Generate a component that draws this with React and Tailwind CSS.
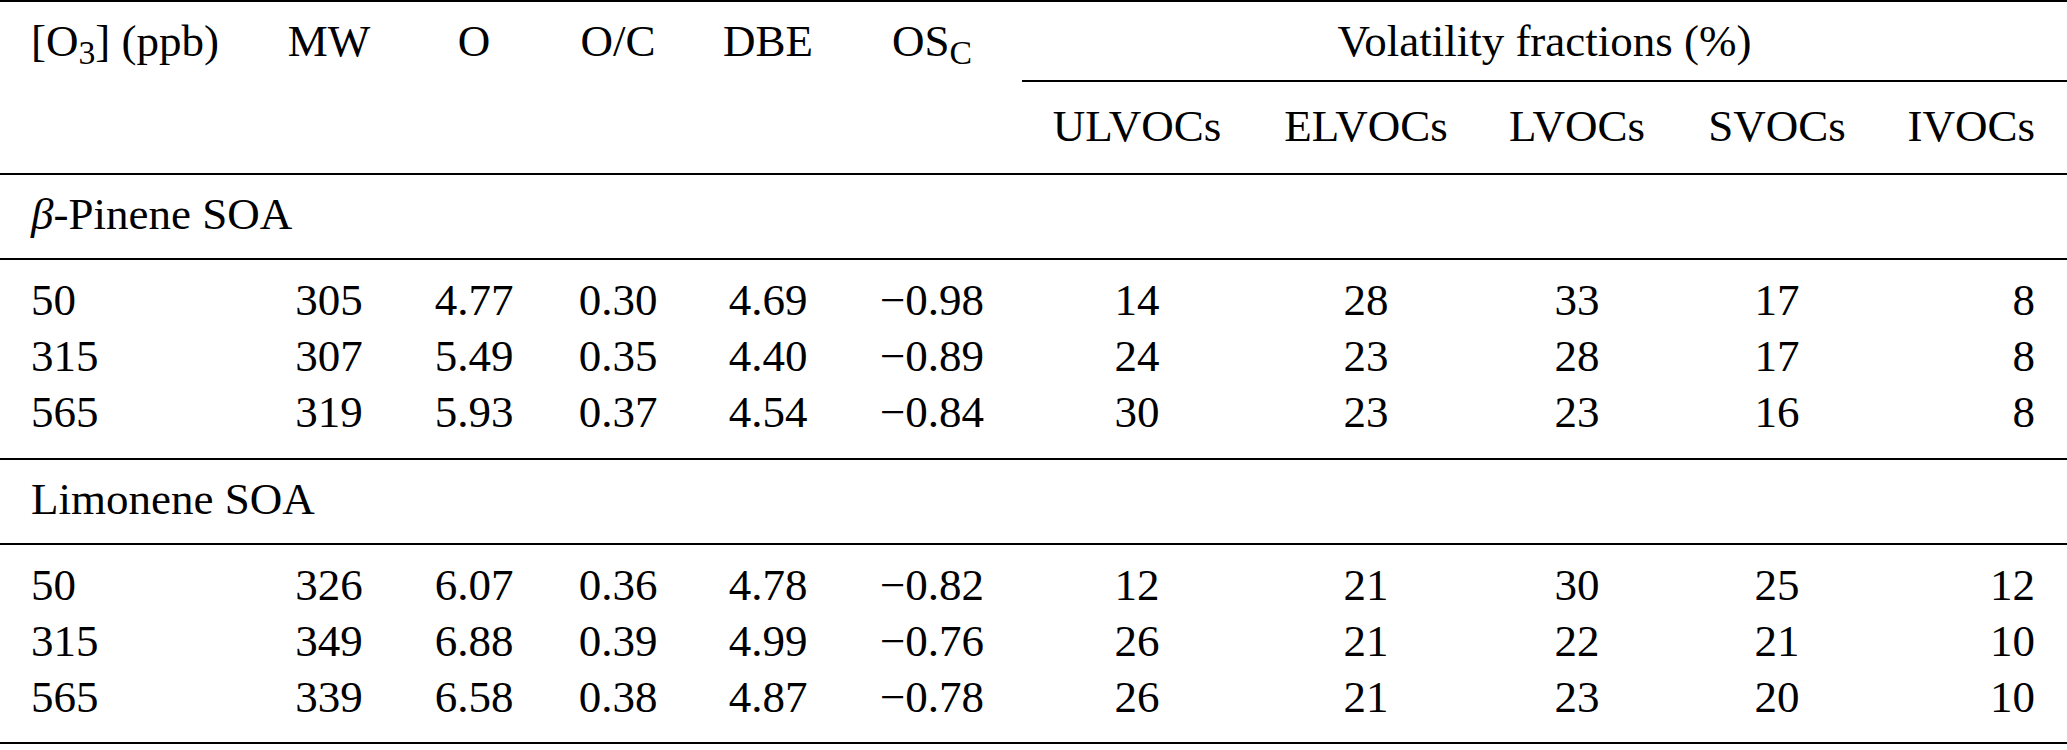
import React from 'react';

const grid = 'grid grid-cols-[270px_118px_172px_116px_184px_144px_266px_192px_230px_170px_205px]';

const groups = [
  {
    label: <><i>β</i>-Pinene SOA</>,
    pad: 'pb-[5px]',
    body: 'pt-[12px] pb-[18px]',
    rows: [
      ['50', '305', '4.77', '0.30', '4.69', '−0.98', '14', '28', '33', '17', '8'],
      ['315', '307', '5.49', '0.35', '4.40', '−0.89', '24', '23', '28', '17', '8'],
      ['565', '319', '5.93', '0.37', '4.54', '−0.84', '30', '23', '23', '16', '8'],
    ],
  },
  {
    label: 'Limonene SOA',
    pad: 'pb-[4px]',
    body: 'pt-[12px] pb-[17px]',
    rows: [
      ['50', '326', '6.07', '0.36', '4.78', '−0.82', '12', '21', '30', '25', '12'],
      ['315', '349', '6.88', '0.39', '4.99', '−0.76', '26', '21', '22', '21', '10'],
      ['565', '339', '6.58', '0.38', '4.87', '−0.78', '26', '21', '23', '20', '10'],
    ],
  },
];

const Cell = ({ i, children }) => {
  if (i === 0) return <div className="pl-[31px] text-left">{children}</div>;
  if (i === 10) return <div className="pr-[32px] text-right">{children}</div>;
  return <div className="text-center">{children}</div>;
};

const Group = ({ group }) => (
  <>
    <div className={`h-[85px] flex items-center pl-[31px] border-b-2 border-black ${group.pad}`}>{group.label}</div>
    <div className={`${group.body} border-b-2 border-black`}>
      {group.rows.map((row, r) => (
        <div key={r} className={`${grid} h-[56px] items-center`}>
          {row.map((v, i) => <Cell key={i} i={i}>{v}</Cell>)}
        </div>
      ))}
    </div>
  </>
);

export default function App() {
  const left = [
    <>[O<sub>3</sub>] (ppb)</>,
    'MW',
    'O',
    'O/C',
    'DBE',
    <>OS<sub>C</sub></>,
  ];
  const vol = ['ULVOCs', 'ELVOCs', 'LVOCs', 'SVOCs', 'IVOCs'];

  return (
    <div className="w-[2067px] h-[750px] bg-white text-black font-['Liberation_Serif','Times_New_Roman',serif] text-[45px] leading-none overflow-hidden">
      <div className="border-t-2 border-black">
        <div className={`${grid} grid-rows-[80px_91px] border-b-2 border-black`}>
          {left.map((l, i) => (
            <div key={i} className="row-start-1 flex items-center pb-[2px]" style={{ gridColumnStart: i + 1 }}>
              <div className="w-full"><Cell i={i}>{l}</Cell></div>
            </div>
          ))}
          <div className="row-start-1 col-start-7 col-span-5 ml-[18px] border-b-2 border-black flex items-center justify-center">
            Volatility fractions (%)
          </div>
          {vol.map((v, i) => (
            <div key={v} className="row-start-2 flex items-center pb-[3px]" style={{ gridColumnStart: i + 7 }}>
              <div className="w-full"><Cell i={i + 6}>{v}</Cell></div>
            </div>
          ))}
        </div>
        {groups.map((g, i) => <Group key={i} group={g} />)}
      </div>
    </div>
  );
}
